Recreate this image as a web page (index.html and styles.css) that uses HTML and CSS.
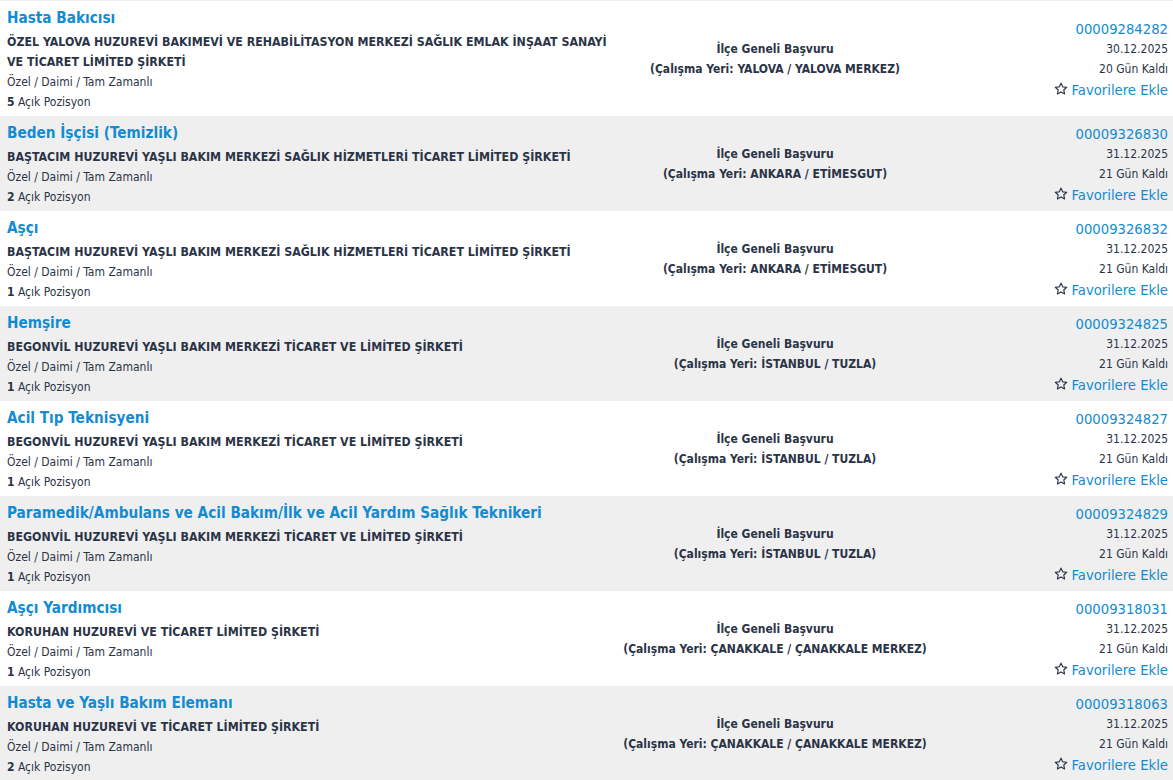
FILE: index.html
```html
<!DOCTYPE html>
<html lang="tr">
<head>
<meta charset="utf-8">
<title>İlanlar</title>
<link rel="stylesheet" href="styles.css">
</head>
<body>
<div class="list">
  <div class="row">
    <div class="col-left">
      <a class="title">Hasta Bakıcısı</a>
      <div class="company">ÖZEL YALOVA HUZUREVİ BAKIMEVİ VE REHABİLİTASYON MERKEZİ SAĞLIK EMLAK İNŞAAT SANAYİ VE TİCARET LİMİTED ŞİRKETİ</div>
      <div class="line">Özel / Daimi / Tam Zamanlı</div>
      <div class="line"><b>5</b> Açık Pozisyon</div>
    </div>
    <div class="col-mid">
      <div class="mline">İlçe Geneli Başvuru</div>
      <div class="mline">(Çalışma Yeri: YALOVA / YALOVA MERKEZ)</div>
    </div>
    <div class="col-right">
      <a class="num">00009284282</a>
      <div class="rline">30.12.2025</div>
      <div class="rline">20 Gün Kaldı</div>
      <a class="fav"><svg class="star" viewBox="0 0 16 16"><path d="M8 1.3l1.95 4.2 4.6.5-3.4 3.1.95 4.55L8 11.35 3.9 13.65l.95-4.55L1.45 6l4.6-.5z"/></svg>Favorilere Ekle</a>
    </div>
  </div>
  <div class="row">
    <div class="col-left">
      <a class="title">Beden İşçisi (Temizlik)</a>
      <div class="company">BAŞTACIM HUZUREVİ YAŞLI BAKIM MERKEZİ SAĞLIK HİZMETLERİ TİCARET LİMİTED ŞİRKETİ</div>
      <div class="line">Özel / Daimi / Tam Zamanlı</div>
      <div class="line"><b>2</b> Açık Pozisyon</div>
    </div>
    <div class="col-mid">
      <div class="mline">İlçe Geneli Başvuru</div>
      <div class="mline">(Çalışma Yeri: ANKARA / ETİMESGUT)</div>
    </div>
    <div class="col-right">
      <a class="num">00009326830</a>
      <div class="rline">31.12.2025</div>
      <div class="rline">21 Gün Kaldı</div>
      <a class="fav"><svg class="star" viewBox="0 0 16 16"><path d="M8 1.3l1.95 4.2 4.6.5-3.4 3.1.95 4.55L8 11.35 3.9 13.65l.95-4.55L1.45 6l4.6-.5z"/></svg>Favorilere Ekle</a>
    </div>
  </div>
  <div class="row">
    <div class="col-left">
      <a class="title">Aşçı</a>
      <div class="company">BAŞTACIM HUZUREVİ YAŞLI BAKIM MERKEZİ SAĞLIK HİZMETLERİ TİCARET LİMİTED ŞİRKETİ</div>
      <div class="line">Özel / Daimi / Tam Zamanlı</div>
      <div class="line"><b>1</b> Açık Pozisyon</div>
    </div>
    <div class="col-mid">
      <div class="mline">İlçe Geneli Başvuru</div>
      <div class="mline">(Çalışma Yeri: ANKARA / ETİMESGUT)</div>
    </div>
    <div class="col-right">
      <a class="num">00009326832</a>
      <div class="rline">31.12.2025</div>
      <div class="rline">21 Gün Kaldı</div>
      <a class="fav"><svg class="star" viewBox="0 0 16 16"><path d="M8 1.3l1.95 4.2 4.6.5-3.4 3.1.95 4.55L8 11.35 3.9 13.65l.95-4.55L1.45 6l4.6-.5z"/></svg>Favorilere Ekle</a>
    </div>
  </div>
  <div class="row">
    <div class="col-left">
      <a class="title">Hemşire</a>
      <div class="company">BEGONVİL HUZUREVİ YAŞLI BAKIM MERKEZİ TİCARET VE LİMİTED ŞİRKETİ</div>
      <div class="line">Özel / Daimi / Tam Zamanlı</div>
      <div class="line"><b>1</b> Açık Pozisyon</div>
    </div>
    <div class="col-mid">
      <div class="mline">İlçe Geneli Başvuru</div>
      <div class="mline">(Çalışma Yeri: İSTANBUL / TUZLA)</div>
    </div>
    <div class="col-right">
      <a class="num">00009324825</a>
      <div class="rline">31.12.2025</div>
      <div class="rline">21 Gün Kaldı</div>
      <a class="fav"><svg class="star" viewBox="0 0 16 16"><path d="M8 1.3l1.95 4.2 4.6.5-3.4 3.1.95 4.55L8 11.35 3.9 13.65l.95-4.55L1.45 6l4.6-.5z"/></svg>Favorilere Ekle</a>
    </div>
  </div>
  <div class="row">
    <div class="col-left">
      <a class="title">Acil Tıp Teknisyeni</a>
      <div class="company">BEGONVİL HUZUREVİ YAŞLI BAKIM MERKEZİ TİCARET VE LİMİTED ŞİRKETİ</div>
      <div class="line">Özel / Daimi / Tam Zamanlı</div>
      <div class="line"><b>1</b> Açık Pozisyon</div>
    </div>
    <div class="col-mid">
      <div class="mline">İlçe Geneli Başvuru</div>
      <div class="mline">(Çalışma Yeri: İSTANBUL / TUZLA)</div>
    </div>
    <div class="col-right">
      <a class="num">00009324827</a>
      <div class="rline">31.12.2025</div>
      <div class="rline">21 Gün Kaldı</div>
      <a class="fav"><svg class="star" viewBox="0 0 16 16"><path d="M8 1.3l1.95 4.2 4.6.5-3.4 3.1.95 4.55L8 11.35 3.9 13.65l.95-4.55L1.45 6l4.6-.5z"/></svg>Favorilere Ekle</a>
    </div>
  </div>
  <div class="row">
    <div class="col-left">
      <a class="title">Paramedik/Ambulans ve Acil Bakım/İlk ve Acil Yardım Sağlık Teknikeri</a>
      <div class="company">BEGONVİL HUZUREVİ YAŞLI BAKIM MERKEZİ TİCARET VE LİMİTED ŞİRKETİ</div>
      <div class="line">Özel / Daimi / Tam Zamanlı</div>
      <div class="line"><b>1</b> Açık Pozisyon</div>
    </div>
    <div class="col-mid">
      <div class="mline">İlçe Geneli Başvuru</div>
      <div class="mline">(Çalışma Yeri: İSTANBUL / TUZLA)</div>
    </div>
    <div class="col-right">
      <a class="num">00009324829</a>
      <div class="rline">31.12.2025</div>
      <div class="rline">21 Gün Kaldı</div>
      <a class="fav"><svg class="star" viewBox="0 0 16 16"><path d="M8 1.3l1.95 4.2 4.6.5-3.4 3.1.95 4.55L8 11.35 3.9 13.65l.95-4.55L1.45 6l4.6-.5z"/></svg>Favorilere Ekle</a>
    </div>
  </div>
  <div class="row">
    <div class="col-left">
      <a class="title">Aşçı Yardımcısı</a>
      <div class="company">KORUHAN HUZUREVİ VE TİCARET LİMİTED ŞİRKETİ</div>
      <div class="line">Özel / Daimi / Tam Zamanlı</div>
      <div class="line"><b>1</b> Açık Pozisyon</div>
    </div>
    <div class="col-mid">
      <div class="mline">İlçe Geneli Başvuru</div>
      <div class="mline">(Çalışma Yeri: ÇANAKKALE / ÇANAKKALE MERKEZ)</div>
    </div>
    <div class="col-right">
      <a class="num">00009318031</a>
      <div class="rline">31.12.2025</div>
      <div class="rline">21 Gün Kaldı</div>
      <a class="fav"><svg class="star" viewBox="0 0 16 16"><path d="M8 1.3l1.95 4.2 4.6.5-3.4 3.1.95 4.55L8 11.35 3.9 13.65l.95-4.55L1.45 6l4.6-.5z"/></svg>Favorilere Ekle</a>
    </div>
  </div>
  <div class="row">
    <div class="col-left">
      <a class="title">Hasta ve Yaşlı Bakım Elemanı</a>
      <div class="company">KORUHAN HUZUREVİ VE TİCARET LİMİTED ŞİRKETİ</div>
      <div class="line">Özel / Daimi / Tam Zamanlı</div>
      <div class="line"><b>2</b> Açık Pozisyon</div>
    </div>
    <div class="col-mid">
      <div class="mline">İlçe Geneli Başvuru</div>
      <div class="mline">(Çalışma Yeri: ÇANAKKALE / ÇANAKKALE MERKEZ)</div>
    </div>
    <div class="col-right">
      <a class="num">00009318063</a>
      <div class="rline">31.12.2025</div>
      <div class="rline">21 Gün Kaldı</div>
      <a class="fav"><svg class="star" viewBox="0 0 16 16"><path d="M8 1.3l1.95 4.2 4.6.5-3.4 3.1.95 4.55L8 11.35 3.9 13.65l.95-4.55L1.45 6l4.6-.5z"/></svg>Favorilere Ekle</a>
    </div>
  </div>
</div>
</body>
</html>
```

FILE: styles.css
```css
html, body {
  margin: 0;
  padding: 0;
  background: #ffffff;
}
body {
  font-family: "DejaVu Sans Condensed", "DejaVu Sans", Verdana, sans-serif;
  font-size: 12px;
  color: #2b3447;
}
.list {
  border-top: 1px solid #f0f0f0;
}
.row {
  display: grid;
  grid-template-columns: 620px 310px 1fr;
  align-items: center;
  background: #ffffff;
}
.row:nth-child(even) {
  background: #efefef;
}
.col-left {
  padding: 5px 5px 4px 7px;
  align-self: start;
}
.title {
  display: block;
  font-size: 15.2px;
  font-weight: bold;
  line-height: 24px;
  color: #138bd2;
  margin-bottom: 2px;
  cursor: pointer;
}
.company {
  font-weight: bold;
  font-size: 12.3px;
  line-height: 20px;
}
.line {
  line-height: 20px;
}
.col-mid {
  text-align: center;
  font-weight: bold;
}
.mline {
  line-height: 20px;
}
.col-right {
  text-align: right;
  padding-right: 5px;
}
.num {
  display: block;
  font-size: 14.7px;
  line-height: 21px;
  color: #138bd2;
}
.rline {
  line-height: 20px;
}
.fav {
  display: inline-flex;
  align-items: center;
  gap: 4px;
  font-size: 14.7px;
  line-height: 21px;
  color: #138bd2;
}
.star {
  width: 14px;
  height: 14px;
  fill: none;
  stroke: #2b3447;
  stroke-width: 1.3;
  stroke-linejoin: round;
}
```
